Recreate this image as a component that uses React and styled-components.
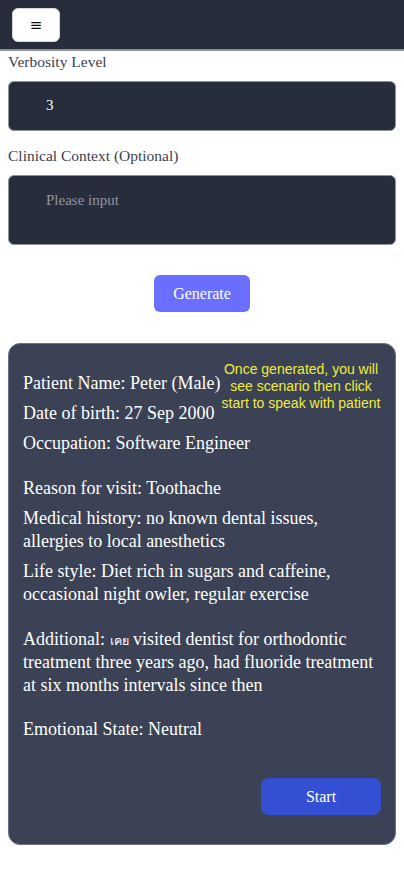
import React from "react";
import styled, { createGlobalStyle } from "styled-components";

const GlobalStyle = createGlobalStyle`
  body {
    margin: 0;
    background: #ffffff;
    font-family: "Liberation Serif", "DejaVu Serif", serif;
  }
`;

const Header = styled.header`
  height: 49px;
  background: #272d3a;
  border-bottom: 2px solid #8e939c;
  display: flex;
  align-items: center;
  padding: 0 12px;
`;

const MenuButton = styled.button`
  width: 48px;
  height: 34px;
  background: #ffffff;
  border: 1px solid #d5d7db;
  border-radius: 6px;
  font-size: 15px;
  color: #111;
  font-family: "DejaVu Sans", sans-serif;
  display: flex;
  align-items: center;
  justify-content: center;
  padding: 0;
`;

const Main = styled.main`
  padding: 0 8px;
  display: flex;
  flex-direction: column;
`;

const Label = styled.label`
  display: block;
  font-size: 15.5px;
  color: #3c4250;
  line-height: 18px;
  margin-top: ${(p) => p.$top || 0}px;
  margin-bottom: 10px;
`;

const Field = styled.div`
  background: #272d3a;
  border: 1px solid #8e939c;
  border-radius: 6px;
  height: ${(p) => p.$h}px;
  box-sizing: border-box;
  padding: ${(p) => p.$pt}px 37px 0;
  font-size: 15px;
  color: ${(p) => (p.$placeholder ? "#8f97a6" : "#ffffff")};
`;

const GenerateRow = styled.div`
  display: flex;
  justify-content: center;
  margin-top: 30px;
`;

const GenerateButton = styled.button`
  width: 96px;
  height: 37px;
  background: #6b6fff;
  color: #ffffff;
  border: none;
  border-radius: 6px;
  font-family: inherit;
  font-size: 16px;
`;

const Card = styled.section`
  position: relative;
  margin-top: 31px;
  background: #3b4255;
  border: 1px solid #6c7383;
  border-radius: 12px;
  padding: 28px 15px 29px 14px;
  color: #ffffff;
`;

const Note = styled.div`
  position: absolute;
  top: 17px;
  right: 9px;
  width: 170px;
  text-align: center;
  font-family: "Liberation Sans", Arial, sans-serif;
  font-size: 14px;
  line-height: 17px;
  color: #f0ec3c;
`;

const Line = styled.p`
  margin: 0 0 ${(p) => p.$gap || 7}px;
  font-size: 18px;
  line-height: 23px;
`;

const Thai = styled.span`
  font-size: 12.5px;
  line-height: 0;
`;

const StartRow = styled.div`
  display: flex;
  justify-content: flex-end;
  margin: 37px -1px 0 0;
`;

const StartButton = styled.button`
  width: 120px;
  height: 37px;
  background: #334fd4;
  color: #ffffff;
  border: none;
  border-radius: 8px;
  font-family: inherit;
  font-size: 16px;
`;

export default function App() {
  return (
    <>
      <GlobalStyle />
      <Header>
        <MenuButton>≡</MenuButton>
      </Header>
      <Main>
        <Label $top={2}>Verbosity Level</Label>
        <Field $h={50} $pt={15}>3</Field>
        <Label $top={16}>Clinical Context (Optional)</Label>
        <Field $h={70} $pt={16} $placeholder>Please input</Field>
        <GenerateRow>
          <GenerateButton>Generate</GenerateButton>
        </GenerateRow>
        <Card>
          <Note>Once generated, you will see scenario then click start to speak with patient</Note>
          <Line>Patient Name: Peter (Male)</Line>
          <Line>Date of birth: 27 Sep 2000</Line>
          <Line $gap={22}>Occupation: Software Engineer</Line>
          <Line>Reason for visit: Toothache</Line>
          <Line>Medical history: no known dental issues, allergies to local anesthetics</Line>
          <Line $gap={22}>Life style: Diet rich in sugars and caffeine, occasional night owler, regular exercise</Line>
          <Line $gap={21}>
            Additional: <Thai>เคย</Thai> visited dentist for orthodontic treatment three years ago, had fluoride treatment at six months intervals since then
          </Line>
          <Line>Emotional State: Neutral</Line>
          <StartRow>
            <StartButton>Start</StartButton>
          </StartRow>
        </Card>
      </Main>
    </>
  );
}
